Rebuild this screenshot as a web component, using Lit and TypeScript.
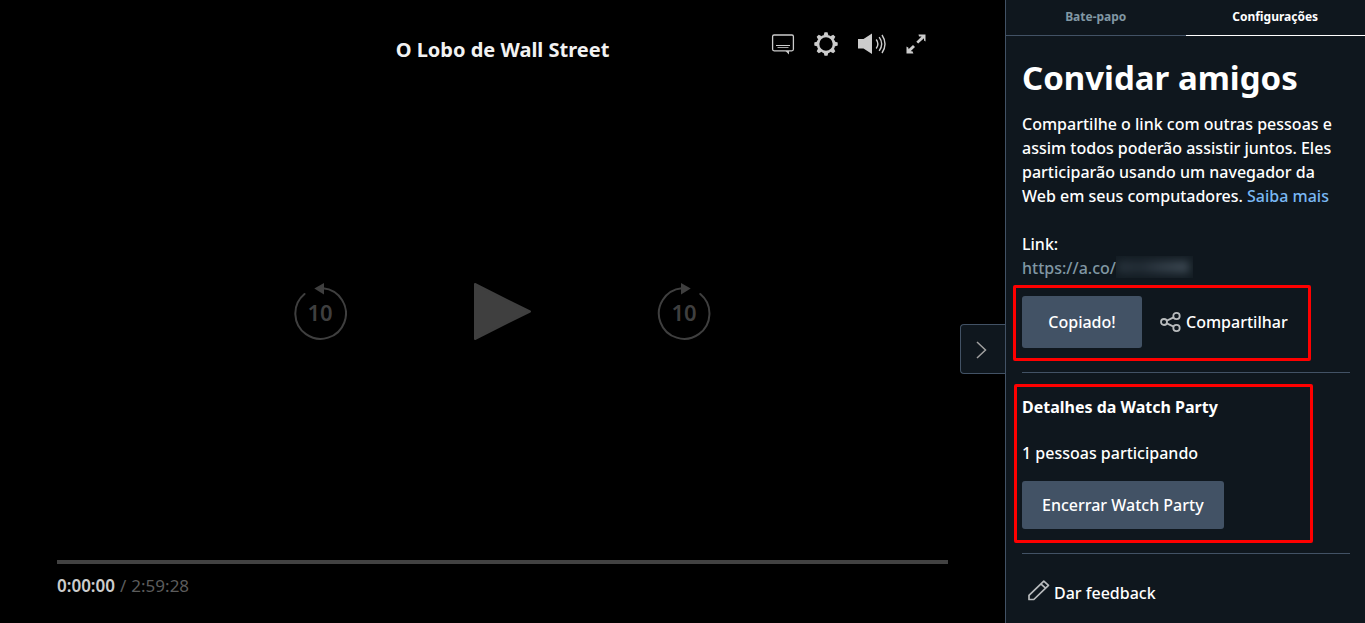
import { LitElement, html, css, svg } from "lit";
import { customElement, state } from "lit/decorators.js";

const captionsIcon = svg`<svg width="24" height="22" viewBox="0 0 24 22" fill="none" stroke="#ccc" aria-hidden="true">
  <rect x="1.600" y="2" width="20.800" height="15.800" rx="1.500" stroke-width="1.300"/>
  <path d="M5 12.500h14" stroke-width="1"/><path d="M6.500 14.500h11" stroke-width="1" opacity=".8"/>
  <path d="M14.500 18h3.500v3.500z" fill="#ccc" stroke="none"/></svg>`;

const gearIcon = svg`<svg width="24" height="24" viewBox="-12 -12 24 24" fill="#ccc" aria-hidden="true">
  <circle r="8" fill="none" stroke="#ccc" stroke-width="2.6"/>
  ${[0, 45, 90, 135, 180, 225, 270, 315].map(
    (a) => svg`<path d="M-2.4-8.5L-1.5-11.7h3L2.4-8.5z" transform="rotate(${a})"/>`
  )}</svg>`;

const volumeIcon = svg`<svg width="30" height="22" viewBox="0 0 30 22" fill="none" stroke="#ccc" stroke-width="1.4" aria-hidden="true">
  <path d="M1 6h5.5L15 .5v20.5l-8.500-5.500H1z" fill="#ccc" stroke="none"/>
  <path d="M19.200 6.500q3.400 4.500 0 9M22.200 4.200q5 6.800 0 13.600M25 2q6 9 0 18"/></svg>`;

const expandIcon = svg`<svg width="20" height="20" viewBox="0 0 20 20" fill="#ccc" aria-hidden="true">
  <path d="M12.500 .5h7v7l-1.500-1v-2.300l-5.800 5.400-1.900-1.900 5.300-5.200h-2.600zM.5 12.500l2 1.200v1.600l4.500-4.400 2 2-4.400 4.400h1.800l1 2.200H.5z"/></svg>`;

const rewindIcon = svg`<svg width="54" height="61" viewBox="0 0 54 61" fill="none" aria-hidden="true">
  <path d="M11.500 13A25.300 25.300 0 1 0 30 7.300" stroke="#3f3f3f" stroke-width="2" stroke-linecap="round"/>
  <path d="M21.300 7.600L31 2v11.500z" fill="#3f3f3f"/></svg>`;

const forwardIcon = svg`<svg width="54" height="61" viewBox="0 0 54 61" fill="none" aria-hidden="true">
  <path d="M43.300 13A25.300 25.300 0 1 1 24.800 7.300" stroke="#3f3f3f" stroke-width="2" stroke-linecap="round"/>
  <path d="M33.700 7.600L24 2v11.500z" fill="#3f3f3f"/></svg>`;

const playIcon = svg`<svg width="58" height="59" viewBox="0 0 58 59" aria-hidden="true">
  <path d="M2 2v55L57 29.500z" fill="#3f3f3f" stroke="#3f3f3f" stroke-width="2" stroke-linejoin="round"/></svg>`;

const chevronIcon = svg`<svg width="12" height="20" viewBox="0 0 12 20" fill="none" stroke="#a0a0a0" stroke-width="1.500" aria-hidden="true">
  <path d="M2 2l8.500 8L2 18"/></svg>`;

const shareIcon = svg`<svg width="22" height="22" viewBox="0 0 22 22" fill="none" stroke="#b8bbbd" stroke-width="1.800" aria-hidden="true">
  <circle cx="4" cy="11" r="3"/><circle cx="16.500" cy="5" r="3.200"/><circle cx="16.500" cy="17" r="3.200"/>
  <path d="M6.900 9.600l6.700-3.200M6.900 12.400l6.700 3.200"/></svg>`;

const pencilIcon = svg`<svg width="22" height="26" viewBox="0 0 22 26" fill="none" stroke="#b8bbbd" stroke-width="1.700" stroke-linejoin="round" aria-hidden="true">
  <path d="M1 19.500v-4.200L15.800 1.100l4.700 4.200L5.800 19.500zM12.800 3.900l4.800 4.200"/></svg>`;

@customElement("video-player")
class VideoPlayer extends LitElement {
  static styles = css`
    :host {
      position: relative;
      display: grid;
      grid-template-rows: 1fr auto 1fr;
      background: #000;
      min-width: 0;
    }
    button {
      display: grid;
      place-items: center;
      padding: 0;
      border: 0;
      background: none;
      color: inherit;
      font: inherit;
      cursor: pointer;
    }
    svg { display: block; }
    .top {
      display: grid;
      grid-template-columns: 1fr auto 1fr;
      align-items: start;
      padding: 32px 79px 0;
    }
    .title {
      grid-column: 2;
      margin: 0;
      padding-top: 4px;
      font-size: 20px;
      line-height: 28px;
      font-weight: 700;
      color: #f2f2f2;
    }
    .tools {
      display: flex;
      justify-content: flex-end;
      align-items: center;
      gap: 19px;
      height: 24px;
    }
    .transport {
      display: flex;
      justify-content: center;
      align-items: center;
      gap: 126px;
      padding-right: 1px;
    }
    .skip > * { grid-area: 1 / 1; }
    .amount {
      font-size: 22px;
      line-height: 28px;
      font-weight: 600;
      color: #3f3f3f;
    }
    .bottom {
      align-self: end;
      padding: 0 57px 25px;
    }
    .track {
      height: 4px;
      background: #424242;
    }
    .time {
      display: flex;
      gap: 5px;
      padding-top: 10px;
      font-size: 17px;
      line-height: 24px;
      color: #5c5c5c;
    }
    .now {
      font-weight: 600;
      color: #ccc;
    }
    .collapse {
      position: absolute;
      right: 0;
      top: calc(50% + 12px);
      width: 45px;
      height: 50px;
      padding: 2px 4px 0 0;
      border: 1px solid #425265;
      border-right: 0;
      border-radius: 4px 0 0 4px;
      background: #0f171e;
    }
  `;

  render() {
    return html`
      <header class="top">
        <h2 class="title">O Lobo de Wall Street</h2>
        <div class="tools">
          <button aria-label="Legendas">${captionsIcon}</button>
          <button aria-label="Opções">${gearIcon}</button>
          <button aria-label="Volume">${volumeIcon}</button>
          <button aria-label="Tela cheia">${expandIcon}</button>
        </div>
      </header>
      <div class="transport">
        <button class="skip" aria-label="Voltar 10 segundos">${rewindIcon}<span class="amount">10</span></button>
        <button aria-label="Reproduzir">${playIcon}</button>
        <button class="skip" aria-label="Avançar 10 segundos">${forwardIcon}<span class="amount">10</span></button>
      </div>
      <footer class="bottom">
        <div class="track"></div>
        <div class="time"><span class="now">0:00:00</span><span>/</span><span>2:59:28</span></div>
      </footer>
      <button class="collapse" aria-label="Recolher painel">${chevronIcon}</button>
    `;
  }
}

@customElement("party-panel")
class PartyPanel extends LitElement {
  @state() private tab = "settings";

  static styles = css`
    :host {
      display: block;
      border-left: 1px solid #425265;
      background: #0f171e;
      color: #fff;
      font-size: 16px;
      line-height: 24px;
      font-weight: 500;
    }
    button {
      padding: 0;
      border: 0;
      background: none;
      color: inherit;
      font: inherit;
      cursor: pointer;
    }
    h1, h2, p { margin: 0; }
    svg { display: block; }
    .tabs {
      display: grid;
      grid-template-columns: 1fr 1fr;
    }
    .tab {
      height: 36px;
      padding-bottom: 2px;
      border-bottom: 1px solid #425265;
      font-size: 12px;
      font-weight: 700;
      color: #8197a4;
    }
    .tab[aria-selected="true"] {
      border-color: #fff;
      color: #fff;
    }
    .body { padding: 18px 15px 12px 16px; }
    .heading {
      font-size: 33px;
      line-height: 48px;
      font-weight: 700;
    }
    .intro { padding: 10px 0 24px; }
    .more { color: #79b8f3; text-decoration: none; }
    .url { display: flex; color: #8197a4; }
    .hidden-code {
      width: 77px;
      height: 22px;
      overflow: hidden;
      background: #131c23;
    }
    .smudge {
      display: block;
      height: 12px;
      margin: 5px 4px 0 2px;
      background: linear-gradient(90deg, #29343d, #222c35 30%, #303b45 60%, #3e4a54);
      filter: blur(4px);
    }
    .actions {
      position: relative;
      display: flex;
      align-items: center;
      gap: 18px;
      padding: 16px 0 24px;
    }
    .primary {
      height: 48px;
      padding: 0 20px;
      border-radius: 3px;
      background: #425265;
    }
    .copy {
      width: 120px;
      height: 52px;
    }
    .plain {
      display: flex;
      align-items: center;
      gap: 4px;
    }
    .details {
      position: relative;
      padding: 22px 0 24px;
      border: solid #425265;
      border-width: 1px 0;
    }
    .subheading {
      font-size: 16px;
      line-height: 24px;
      font-weight: 700;
    }
    .count { padding: 22px 0 16px; }
    .mark {
      position: absolute;
      border: 3px solid #f00;
      border-radius: 2px;
      pointer-events: none;
    }
    .mark-actions { inset: 5px 39px 11px -9px; }
    .mark-details { inset: 11px 37px 10px -8px; }
    .feedback { padding: 26px 0 0 6px; }
  `;

  render() {
    return html`
      <div class="tabs" role="tablist">
        <button class="tab" role="tab" aria-selected=${this.tab === "chat"} @click=${() => (this.tab = "chat")}>Bate-papo</button>
        <button class="tab" role="tab" aria-selected=${this.tab === "settings"} @click=${() => (this.tab = "settings")}>Configurações</button>
      </div>
      <div class="body">
        <h1 class="heading">Convidar amigos</h1>
        <p class="intro">
          Compartilhe o link com outras pessoas e<br />assim todos poderão assistir juntos. Eles<br />participarão usando um navegador da<br />Web em seus computadores. <a class="more" href="#">Saiba mais</a>
        </p>
        <p>Link:</p>
        <p class="url">https://a.co/<span class="hidden-code" aria-hidden="true"><span class="smudge"></span></span></p>
        <div class="actions">
          <button class="primary copy">Copiado!</button>
          <button class="plain">${shareIcon}Compartilhar</button>
          <div class="mark mark-actions"></div>
        </div>
        <section class="details">
          <h2 class="subheading">Detalhes da Watch Party</h2>
          <p class="count">1 pessoas participando</p>
          <button class="primary">Encerrar Watch Party</button>
          <div class="mark mark-details"></div>
        </section>
        <button class="plain feedback">${pencilIcon}Dar feedback</button>
      </div>
    `;
  }
}

@customElement("app-root")
class AppRoot extends LitElement {
  static styles = css`
    :host {
      display: grid;
      grid-template-columns: minmax(0, 1fr) 360px;
      min-height: 100vh;
      background: #000;
      font-family: "Noto Sans", "Open Sans", sans-serif;
    }
  `;

  render() {
    return html`<video-player></video-player><party-panel></party-panel>`;
  }
}
